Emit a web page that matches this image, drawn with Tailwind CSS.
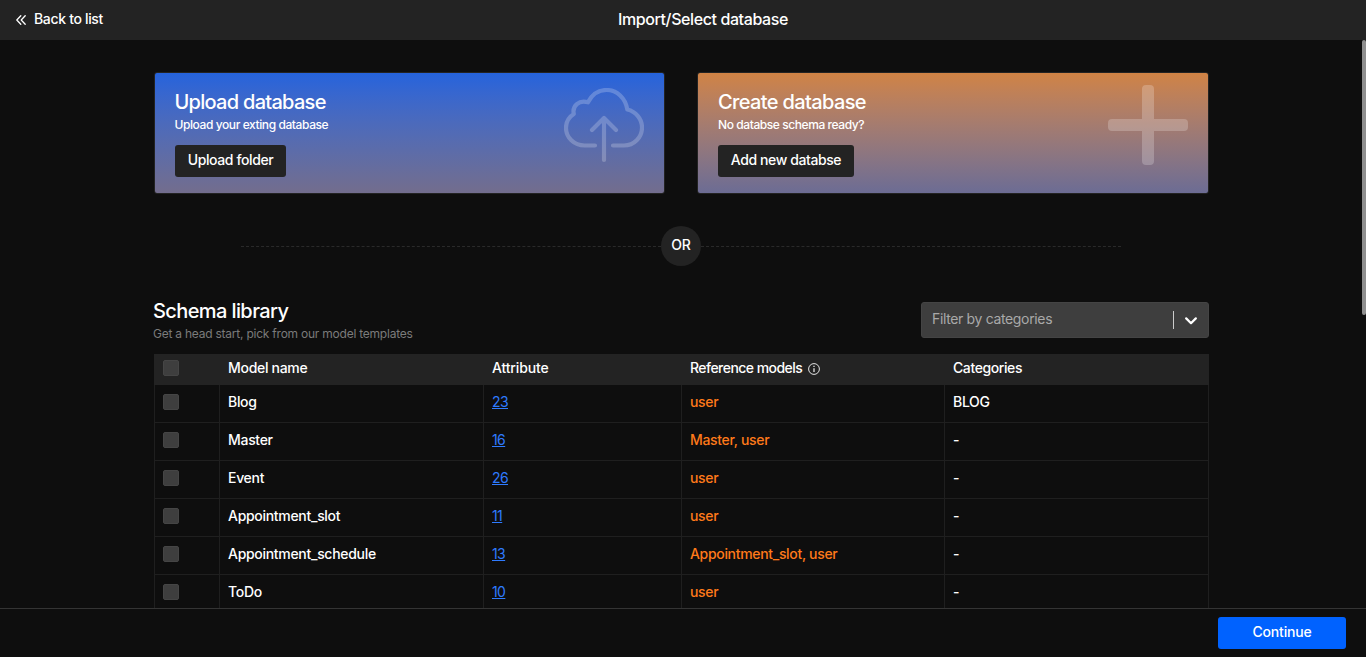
<!DOCTYPE html>
<html lang="en">
<head>
<meta charset="utf-8">
<title>Import/Select database</title>
<script src="https://cdn.jsdelivr.net/npm/@tailwindcss/browser@4"></script>
</head>
<body class="h-[657px] overflow-hidden bg-[#0e0e0e] font-['Inter',sans-serif] text-sm font-medium text-white flex flex-col">
<header class="grid h-10 shrink-0 grid-cols-3 items-center bg-[#232323] pb-0.5">
  <a class="flex items-center pl-4 leading-5">
    <svg class="mr-2 mt-0.5 h-[10px] w-[10px]" viewBox="0 0 10 10" fill="none" stroke="#fff" stroke-width="1.3" stroke-linecap="round" stroke-linejoin="round"><path d="M4.8 .7.8 5l4 4.3M9.2 .7 5.2 5l4 4.3"/></svg>
    <span class="tracking-[-0.33px]">Back to list</span>
  </a>
  <h1 class="whitespace-nowrap pl-10 text-center text-base leading-5 tracking-[-0.4px]">Import/Select database</h1>
</header>

<main class="relative h-[568px] shrink-0 overflow-hidden pl-[154px] pt-8">
  <div class="w-[1055px]">
    <section class="flex justify-between">
      <div class="flex h-[122px] w-[511px] justify-between rounded-[3px] border border-[#232323] bg-linear-to-b from-[#2563dc] to-[#736d8d] pl-[19.5px] pr-5 pt-[17px]">
        <div>
          <h2 class="text-xl leading-6 tracking-[-0.72px]">Upload database</h2>
          <p class="mt-[3px] text-xs leading-4 tracking-[-0.41px]">Upload your exting database</p>
          <button class="ml-[0.5px] mt-3 flex h-8 w-[111px] items-center justify-center rounded-[3px] bg-[#232323] pb-0.5 tracking-[-0.4px]">Upload folder</button>
        </div>
        <svg class="mt-[-2px] h-20 w-20" viewBox="0 0 80 80" fill="none" stroke="#fff" stroke-opacity=".22" stroke-width="4.2" stroke-linecap="round" stroke-linejoin="round"><path d="M31 57.500H20.500C10 57.500 2 49.500 2 40C2 34 5 29 9.800 26C8 18 15 11.500 24 14.300C28 6.500 35 2 42.500 2C53 2 61.500 10 63.300 21.500C72 23.500 78 31 78 39.500C78 49.500 70 57.500 60 57.500H49M40 72V30M28 42 40 30 52 42"/></svg>
      </div>
      <div class="flex h-[122px] w-[512px] justify-between rounded-[3px] border border-[#232323] bg-linear-to-b from-[#d08344] to-[#6c6c94] pl-5 pr-5 pt-[17px]">
        <div>
          <h2 class="text-xl leading-6 tracking-[-0.63px]">Create database</h2>
          <p class="mt-[3px] text-xs leading-4 tracking-[-0.42px]">No databse schema ready?</p>
          <button class="mt-3 flex h-8 w-[136px] items-center justify-center rounded-[3px] bg-[#232323] pb-0.5 tracking-[-0.4px]">Add new databse</button>
        </div>
        <svg class="mt-[-5px] h-20 w-20" viewBox="0 0 80 80" fill="#fff" fill-opacity=".22"><path d="M34 4q0-4 4-4h4q4 0 4 4v30h30q4 0 4 4v4q0 4-4 4H46v30q0 4-4 4h-4q-4 0-4-4V46H4q-4 0-4-4v-4q0-4 4-4h30z"/></svg>
      </div>
    </section>

    <div class="ml-[87px] mt-8 flex h-10 w-[880px] items-center">
      <div class="flex-1 border-t border-dashed border-[#2a2a2a]"></div>
      <div class="flex size-10 items-center justify-center rounded-full bg-[#232323] pb-0.5 tracking-[-0.2px]">OR</div>
      <div class="flex-1 border-t border-dashed border-[#2a2a2a]"></div>
    </div>

    <section class="mt-[33px] flex h-[55px] justify-between">
      <div class="-ml-px">
        <h2 class="text-xl leading-6 tracking-[-0.6px]">Schema library</h2>
        <p class="mt-[3px] text-xs font-normal leading-4 tracking-[-0.23px] text-[#7b7b7b]">Get a head start, pick from our model templates</p>
      </div>
      <div class="mt-[3px] flex h-9 w-72 items-center rounded-[3px] border border-[#444] bg-[#3e3e3e] pl-[10px]">
        <span class="flex-1 pb-0.5 font-normal tracking-[-0.35px] text-[#a9a9a9]">Filter by categories</span>
        <span class="h-[18px] w-px bg-[#ccc]"></span>
        <svg class="ml-[11px] mr-[11px] mt-px h-2 w-3" viewBox="0 0 12 8" fill="none" stroke="#fff" stroke-width="2.200" stroke-linecap="round" stroke-linejoin="round"><path d="M1.200 1.400 6 6.200 10.800 1.400"/></svg>
      </div>
    </section>

    <div id="table" class="leading-5 tracking-[-0.3px]">
      <div class="grid h-[31px] grid-cols-[66px_264px_198px_263px_264px] bg-[#232323]">
        <div class="pl-[9px] pt-1.5"><i class="block size-4 rounded-[2px] border border-[#454545] bg-[#3e3e3e]"></i></div>
        <div class="pl-2 pt-1">Model name</div>
        <div class="pl-2 pt-1 tracking-[-0.15px]">Attribute</div>
        <div class="flex pl-2 pt-1"><span class="tracking-[-0.54px]">Reference models</span>
          <svg class="ml-1.5 mt-[5px] size-3" viewBox="0 0 12 12" fill="none" stroke="#e4e4e4"><circle cx="6" cy="6" r="5.400"/><path d="M6 5.200V9M6 2.800V4" stroke-width="1.300"/></svg></div>
        <div class="pl-2 pt-1 tracking-[-0.4px]">Categories</div>
      </div>
      <div id="rows"></div>
    </div>
  </div>
  <div class="absolute right-0 top-0 h-[275px] w-1 rounded-sm bg-[#8f8f8f]"></div>
</main>

<footer class="flex h-[49px] shrink-0 justify-end border-t border-[#343434] pr-5 pt-2">
  <button class="flex h-8 w-32 items-center justify-center rounded-[3px] bg-[#0062ff] pb-0.5 tracking-[-0.2px]">Continue</button>
</footer>

<template id="row">
  <div class="grid h-[38px] grid-cols-[65px_264px_198px_263px_264px] border-b border-l border-[#1f1f1f] *:border-r *:border-[#1f1f1f]">
    <div class="pl-2 pt-[9px]"><i class="block size-4 rounded-[2px] border border-[#454545] bg-[#3e3e3e]"></i></div>
    <div class="pl-2 pt-[7px]"></div>
    <div class="pl-2 pt-[7px]"><a class="font-normal tracking-[-0.6px] text-[#2f7bff] underline"></a></div>
    <div class="pl-2 pt-[7px] tracking-[-0.32px] text-[#ff7a1a]"></div>
    <div class="pl-2 pt-[7px]"></div>
  </div>
</template>
<script>
const data = [
  ["Blog", "23", "user", "BLOG"],
  ["Master", "16", "Master, user", "-"],
  ["Event", "26", "user", "-"],
  ["Appointment_slot", "11", "user", "-"],
  ["Appointment_schedule", "13", "Appointment_slot, user", "-"],
  ["ToDo", "10", "user", "-"]
];
const t = document.getElementById("row");
for (const [name, count, refs, category] of data) {
  const n = t.content.cloneNode(true), c = n.firstElementChild.children;
  c[1].textContent = name;
  c[2].firstElementChild.textContent = count;
  c[3].textContent = refs;
  c[4].textContent = category;
  document.getElementById("rows").append(n);
}
</script>
</body>
</html>
